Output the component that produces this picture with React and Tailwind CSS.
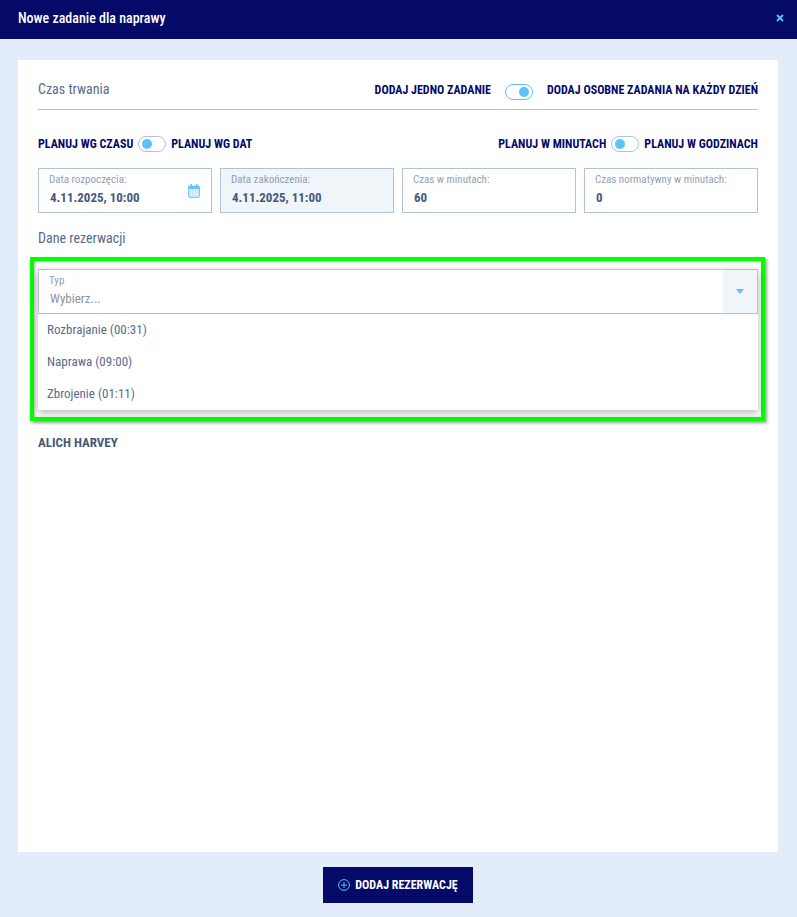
const F = "font-['Roboto',sans-serif] [font-stretch:75%]";

function Toggle({ active }) {
  return (
    <span className={`flex items-center w-[28px] h-[16px] rounded-full border bg-white px-[3px] ${active ? "border-[#5cc1ff] justify-end" : "border-[#b0c1d9] justify-start"}`}>
      <span className="block w-[10px] h-[10px] rounded-full bg-[#5cc1ff]" />
    </span>
  );
}

function Label({ children }) {
  return <span className="text-[12px] leading-[16px] font-bold text-[#050a68] uppercase whitespace-nowrap">{children}</span>;
}

function Field({ label, value, disabled, icon }) {
  return (
    <div className={`relative flex-1 h-[45px] border border-[#b0c1d9] pl-[10px] pt-[4px] ${disabled ? "bg-[#f0f5fa]" : "bg-white"}`}>
      <div className="text-[11px] leading-[14px] text-[#8f9fb8] whitespace-nowrap">{label}</div>
      <div className="text-[13px] leading-[18px] mt-[2px] ml-px font-bold text-[#45597a] whitespace-nowrap">{value}</div>
      {icon && (
        <svg className="absolute right-[11px] top-[15px]" width="12" height="14" viewBox="0 0 12 14" fill="none">
          <rect x="0.5" y="2" width="11" height="11.5" rx="1.5" fill="#5cc1ff" fillOpacity="0.4" stroke="#5cc1ff" strokeOpacity="0.8" />
          <rect x="0.5" y="2" width="11" height="3" fill="#5cc1ff" fillOpacity="0.85" />
          <rect x="2.5" y="0" width="1.5" height="3" fill="#5cc1ff" />
          <rect x="8" y="0" width="1.5" height="3" fill="#5cc1ff" />
          <path d="M2.5 7h1.5M5.3 7h1.5M8 7h1.5M2.5 9h1.5M5.3 9h1.5M8 9h1.5M2.5 11h1.5M5.3 11h1.5M8 11h1.5" stroke="#fff" strokeWidth="1" />
        </svg>
      )}
    </div>
  );
}

export default function App() {
  return (
    <div className={`h-[917px] w-[797px] overflow-hidden flex flex-col bg-[#e3edf9] ${F}`}>
      <header className="h-[39px] shrink-0 bg-[#050a68] flex items-center justify-between pl-[18px] pr-[13px] pb-[3px]">
        <h1 className="text-[14px] font-medium text-white">Nowe zadanie dla naprawy</h1>
        <svg width="8" height="8" viewBox="0 0 8 8"><path d="M1 1l6 6M7 1L1 7" stroke="#5cc1ff" strokeWidth="1.8" /></svg>
      </header>

      <main className="ml-[18px] mt-[21px] h-[792px] w-[760px] shrink-0 bg-white px-5 flex flex-col">
        <div className="flex items-center justify-between h-[50px] pt-[10px] border-b border-[#b0c1d9]">
          <span className="text-[14px] text-[#5a6c8a]">Czas trwania</span>
          <div className="flex items-center">
            <Label>Dodaj jedno zadanie</Label>
            <span className="mx-[14px] translate-y-[2px]"><Toggle active /></span>
            <Label>Dodaj osobne zadania na każdy dzień</Label>
          </div>
        </div>

        <div className="flex items-center justify-between mt-[26px] h-[16px]">
          <div className="flex items-center gap-[5px]">
            <Label>Planuj wg czasu</Label>
            <Toggle />
            <Label>Planuj wg dat</Label>
          </div>
          <div className="flex items-center gap-[5px]">
            <Label>Planuj w minutach</Label>
            <Toggle />
            <Label>Planuj w godzinach</Label>
          </div>
        </div>

        <div className="flex gap-2 mt-[16px]">
          <Field label="Data rozpoczęcia:" value="4.11.2025, 10:00" icon />
          <Field label="Data zakończenia:" value="4.11.2025, 11:00" disabled />
          <Field label="Czas w minutach:" value="60" />
          <Field label="Czas normatywny w minutach:" value="0" />
        </div>

        <div className="mt-[16px] text-[14px] leading-[18px] text-[#5a6c8a]">Dane rezerwacji</div>

        <div className="-ml-2 mt-[10px] h-[164px] w-[735px] border-4 border-[#00ff00] shadow-[2px_2px_3px_rgba(0,0,0,0.4),inset_1px_1px_3px_rgba(0,0,0,0.3)] pl-1 pr-[3px] pt-2">
          <div className="shadow-[0_3px_8px_rgba(0,0,0,0.28)] bg-white">
            <div className="flex h-[45px] border border-[#b0c1d9] bg-white">
              <div className="flex-1 pl-[10px] pt-[4px]">
                <div className="text-[11px] leading-[14px] text-[#8f9fb8]">Typ</div>
                <div className="text-[13px] leading-[18px] mt-[2px] ml-px text-[#8a93a3]">Wybierz...</div>
              </div>
              <div className="w-[34px] bg-[#f0f5fa] flex items-center justify-center">
                <svg width="8" height="5" viewBox="0 0 8 5"><path d="M0 0h8L4 5z" fill="#5cc1ff" /></svg>
              </div>
            </div>
            <ul className="text-[13px] leading-[32px] text-[#5a6c8a] pl-[9px]">
              <li className="h-[32px]">Rozbrajanie (00:31)</li>
              <li className="h-[32px]">Naprawa (09:00)</li>
              <li className="h-[32px]">Zbrojenie (01:11)</li>
            </ul>
          </div>
        </div>

        <div className="mt-[14px] text-[13px] leading-[16px] font-bold text-[#45597a] uppercase">Alich Harvey</div>
      </main>

      <div className="flex justify-center mt-[15px] pr-px">
        <button className="h-[36px] w-[150px] bg-[#050a68] flex items-center justify-center gap-[5px] text-[12px] font-bold text-white uppercase">
          <svg width="12" height="12" viewBox="0 0 12 12" fill="none" stroke="#5cc1ff" strokeWidth="1"><circle cx="6" cy="6" r="5.4" /><path d="M6 3v6M3 6h6" /></svg>
          Dodaj rezerwację
        </button>
      </div>
    </div>
  );
}
